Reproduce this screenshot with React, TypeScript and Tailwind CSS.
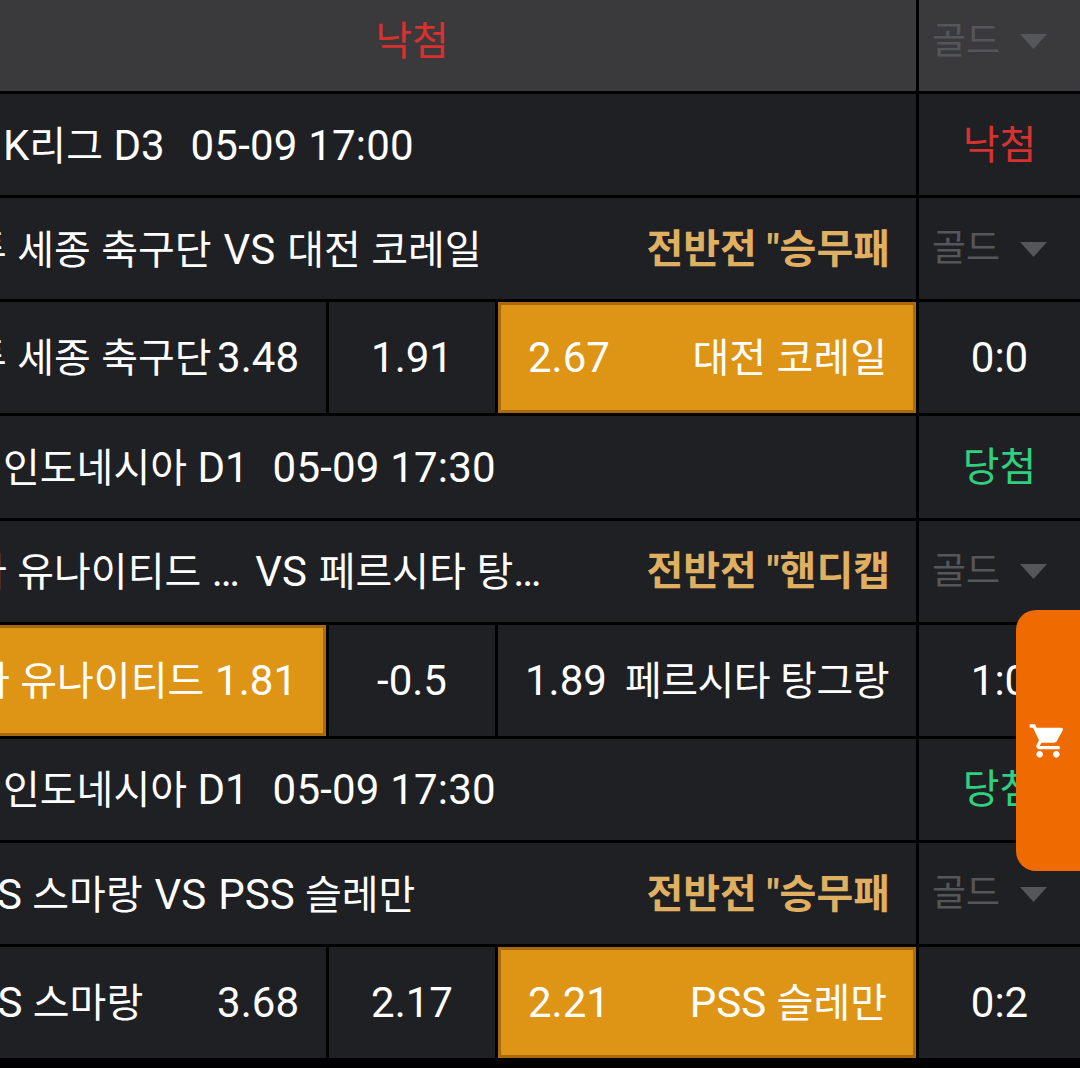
// latin runs sit about 2px bigger than hangul in the app
function T({ text }: { text: string }) {
  const parts = text.split(/([ -~…]+)/);
  return (
    <>
      {parts.map((p, i) =>
        i % 2 === 1 ? (
          <span key={i} className="text-[42px]">{p}</span>
        ) : (
          <span key={i}>{p}</span>
        ),
      )}
    </>
  );
}

function Gold({ header }: { header?: boolean }) {
  return (
    <div className={`flex h-full items-center pl-[13px] text-[37px] text-[#55565a] ${header ? 'pb-[9px]' : ''}`}>
      <span>골드</span>
      <svg className="ml-[20px] mt-[1px]" width="27" height="15" viewBox="0 0 27 15">
        <path d="M0 0h27L13.5 15z" fill="#55565a" />
      </svg>
    </div>
  );
}

function Row({ h, left, right, header, plain }: { h: string; left: React.ReactNode; right: React.ReactNode; header?: boolean; plain?: boolean }) {
  const bg = header ? 'bg-[#3a3a3d]' : 'bg-[#1f2024]';
  return (
    <div className={`flex gap-[3px] ${h}`}>
      <div className={`w-[916px] overflow-hidden ${plain ? '' : bg}`}>{left}</div>
      <div className={`flex-1 ${bg}`}>{right}</div>
    </div>
  );
}

function Info({ league, time, gap = 'gap-[24px]' }: { league: string; time: string; gap?: string }) {
  return (
    <div className={`ml-[3px] flex h-full items-center whitespace-pre pt-[2px] text-white ${gap}`}>
      <span><T text={league} /></span>
      <span className="text-[42px] tracking-[0.2px]">{time}</span>
    </div>
  );
}

function Title({ home, away, market, ml, vs = 'mx-[1.5px]' }: { home: string; away: string; market: string; ml: string; vs?: string }) {
  return (
    <div className="flex h-full items-center justify-between pr-[26px] pt-[2px]">
      <div className={`whitespace-pre text-white ${ml}`}>
        <T text={home} />
        <span className={`text-[42px] ${vs}`}> VS </span>
        <T text={away} />
      </div>
      <div className="whitespace-pre font-bold text-[#e0b062]">{market}</div>
    </div>
  );
}

function Bet({ home, homeOdd, mid, awayOdd, away, homeOn, awayOn, ml }: {
  home: string; homeOdd: string; mid: string; awayOdd: string; away: string; homeOn?: boolean; awayOn?: boolean; ml: string;
}) {
  const on = 'bg-[#de9516] border-[3px] border-[#a86a10]';
  return (
    <div className="flex h-full gap-[3px] text-white">
      <div className={`flex items-center justify-between overflow-hidden pt-[1px] ${homeOn ? `${on} ml-[-10px] w-[336px] pr-[26px]` : 'w-[326px] bg-[#1f2024] pr-[27px]'}`}>
        <span className={`whitespace-pre ${ml}`}><T text={home} /></span>
        <span className="text-[42px]">{homeOdd}</span>
      </div>
      <div className="flex w-[166px] items-center justify-center bg-[#1f2024] pt-[1px] text-[42px]">{mid}</div>
      <div className={`flex flex-1 items-center justify-between pt-[1px] ${awayOn ? `${on} pl-[27px] pr-[26px]` : 'bg-[#1f2024] pl-[27px] pr-[27px]'}`}>
        <span className="text-[42px]">{awayOdd}</span>
        <span className={`whitespace-pre ${awayOn ? '' : 'tracking-[-0.5px]'}`}><T text={away} /></span>
      </div>
    </div>
  );
}

function Status({ text, color }: { text: string; color: string }) {
  return <div className={`flex h-full items-center justify-center pt-[2px] ${color}`}>{text}</div>;
}

function Score({ text }: { text: string }) {
  return <div className="flex h-full items-center justify-center pt-[1px] text-[42px] text-white">{text}</div>;
}

export default function App() {
  return (
    <div
      className="relative h-[1068px] w-[1080px] overflow-hidden bg-black text-[40px] leading-none"
      style={{ fontFamily: 'Roboto, "Noto Sans CJK KR", sans-serif' }}
    >
      <div className="flex flex-col gap-[3px]">
        <Row
          header
          h="h-[91px]"
          left={
            <div className="flex h-full">
              <div className="w-[329px]" />
              <div className="flex w-[166px] items-center justify-center pb-[8px] text-[#d8312f]">낙첨</div>
            </div>
          }
          right={<Gold header />}
        />
        <Row h="h-[101.4px]" left={<Info league="K리그 D3" time="05-09 17:00" gap="gap-[26px]" />} right={<Status text="낙첨" color="text-[#d8312f]" />} />
        <Row h="h-[101px]" left={<Title home="투 세종 축구단" away="대전 코레일" market={'전반전 "승무패'} ml="ml-[-30px]" />} right={<Gold />} />
        <Row plain h="h-[111px]" left={<Bet home="투 세종 축구단" homeOdd="3.48" mid="1.91" awayOdd="2.67" away="대전 코레일" awayOn ml="ml-[-30px]" />} right={<Score text="0:0" />} />
        <Row h="h-[101.4px]" left={<Info league="인도네시아 D1" time="05-09 17:30" />} right={<Status text="당첨" color="text-[#2fd07f]" />} />
        <Row h="h-[101px]" left={<Title home="타 유나이티드 …" away="페르시타 탕…" market={'전반전 "핸디캡'} ml="ml-[-30px]" vs="ml-[5px] mr-[1.5px]" />} right={<Gold />} />
        <Row plain h="h-[111px]" left={<Bet home="타 유나이티드" homeOdd="1.81" mid="-0.5" awayOdd="1.89" away="페르시타 탕그랑" homeOn ml="ml-[-20px]" />} right={<Score text="1:0" />} />
        <Row h="h-[101.4px]" left={<Info league="인도네시아 D1" time="05-09 17:30" />} right={<Status text="당첨" color="text-[#2fd07f]" />} />
        <Row h="h-[101px]" left={<Title home="PSS 스마랑" away="PSS 슬레만" market={'전반전 "승무패'} ml="ml-[-54.5px]" />} right={<Gold />} />
        <Row plain h="h-[111px]" left={<Bet home="PSS 스마랑" homeOdd="3.68" mid="2.17" awayOdd="2.21" away="PSS 슬레만" awayOn ml="ml-[-54px]" />} right={<Score text="0:2" />} />
      </div>
      <div className="absolute left-[1016px] top-[610px] flex h-[261px] w-[64px] items-center rounded-l-[20px] bg-[#ef6a00] pl-[12px]">
        <svg width="40" height="40" viewBox="0 0 24 24" fill="#fff">
          <path d="M15.55 13c.75 0 1.41-.41 1.75-1.03l3.58-6.49c.37-.66-.11-1.48-.87-1.48H5.21l-.94-2H1v2h2l3.6 7.59-1.35 2.44C4.52 15.37 5.48 17 7 17h12v-2H7l1.1-2h7.45zM7 18c-1.1 0-1.99.9-1.99 2S5.9 22 7 22s2-.9 2-2-.9-2-2-2zm10 0c-1.1 0-1.99.9-1.99 2s.89 2 1.99 2 2-.9 2-2-.9-2-2-2z" />
        </svg>
      </div>
    </div>
  );
}
